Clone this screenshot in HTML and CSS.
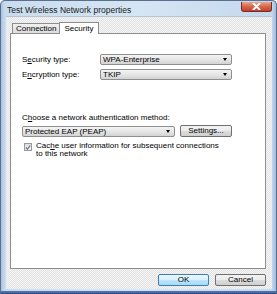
FILE: index.html
```html
<!DOCTYPE html>
<html lang="en">
<head>
    <meta charset="UTF-8">
    <meta name="viewport" content="width=device-width, initial-scale=1.0">
    <title>Test Wireless Network properties</title>
    <link rel="stylesheet" href="styles.css">
</head>
<body>

<div class="window">
    <div class="titlebar">
        <span class="title">Test Wireless Network properties</span>
        <div class="close-btn">
            <svg width="9" height="7" viewBox="0 0 9 7">
                <path d="M1.5 0.5 L7.5 6.5 M7.5 0.5 L1.5 6.5" stroke="#fff" stroke-width="2" stroke-linecap="round"/>
            </svg>
        </div>
    </div>

    <div class="client">
        <div class="tabs">
            <div class="tab">Connection</div>
            <div class="tab active">Security</div>
        </div>

        <div class="panel">
            <div class="field-row first">
                <span class="label">S<u>e</u>curity type:</span>
                <div class="combo wide"><span>WPA-Enterprise</span><i class="arrow"></i></div>
            </div>
            <div class="field-row">
                <span class="label">E<u>n</u>cryption type:</span>
                <div class="combo wide"><span>TKIP</span><i class="arrow"></i></div>
            </div>

            <p class="method-label">C<u>h</u>oose a network authentication method:</p>
            <div class="method-row">
                <div class="combo method"><span>Protected EAP (PEAP)</span><i class="arrow"></i></div>
                <div class="btn settings">Settings...</div>
            </div>

            <div class="check-row">
                <div class="checkbox">
                    <svg width="7" height="7" viewBox="0 0 7 7">
                        <path d="M1 3.5 L2.8 5.5 L6 1.2" fill="none" stroke="#6d7f99" stroke-width="1.4"/>
                    </svg>
                </div>
                <span class="check-text">Cac<u>h</u>e user information for subsequent connections<br>to this network</span>
            </div>
        </div>

        <div class="buttons">
            <div class="btn default">OK</div>
            <div class="btn">Cancel</div>
        </div>
    </div>
</div>

</body>
</html>
```

FILE: styles.css
```css
body {
    margin: 0;
    font-family: "Liberation Sans", Arial, sans-serif;
    font-size: 8px;
    color: #000;
    background: #fff;
}

.window {
    width: 277px;
    height: 294px;
    box-sizing: border-box;
    border: 1px solid #5b6f8c;
    border-bottom-color: #2d4c82;
    border-radius: 5px 5px 0 0;
    background: linear-gradient(90deg, #a9c3e2 0, #c9dcef 4px, #d6e5f3 50%, #c4d8ee calc(100% - 4px), #9fbbdc 100%);
    display: flex;
    flex-direction: column;
    padding: 0 4px 4px 5px;
    box-shadow: inset 0 -2px 0 #4a6fa8;
}

.titlebar {
    height: 15px;
    display: flex;
    align-items: center;
    justify-content: space-between;
    padding-left: 1px;
}

.title {
    font-size: 8.5px;
    color: #1a1a1a;
    margin-top: 2px;
}

.close-btn {
    width: 29px;
    height: 9px;
    margin-top: -3px;
    border: 1px solid #7d2a1c;
    border-top: none;
    border-radius: 0 0 3px 3px;
    background: linear-gradient(#e8a593, #d4674c 50%, #c2412a);
    display: flex;
    align-items: center;
    justify-content: center;
}

.client {
    flex: 1;
    display: flex;
    flex-direction: column;
    padding: 4px 6px 0 4px;
    background-color: #ececec;
    background-image: conic-gradient(#f5f5f5 25%, #e3e3e3 0 50%, #f5f5f5 0 75%, #e3e3e3 0);
    background-size: 2px 2px;
    border-top: 1px solid #b4c4d6;
}

.tabs {
    display: flex;
    align-items: flex-end;
    height: 12px;
    padding-left: 2px;
}

.tab {
    height: 10px;
    padding: 0 3px;
    line-height: 10px;
    border: 1px solid #8c8e94;
    border-bottom: none;
    border-right: none;
    background: linear-gradient(#f1f1f1, #dcdcdc);
    box-sizing: border-box;
}

.tab.active {
    height: 12px;
    line-height: 11px;
    background: #fff;
    border-right: 1px solid #8c8e94;
    padding: 0 5px 0 4px;
    margin-bottom: -1px;
    position: relative;
}

.panel {
    height: 236px;
    box-sizing: border-box;
    background: #fff;
    border: 1px solid #8c8e94;
    padding: 20px 33px 0 11px;
}

.field-row {
    display: flex;
    align-items: center;
    height: 11px;
    margin-bottom: 4px;
}

.label {
    width: 78px;
}

.combo {
    height: 11px;
    box-sizing: border-box;
    border: 1px solid #8e8f8f;
    border-radius: 2px;
    background: linear-gradient(#f4f4f4, #e6e6e6 50%, #d3d3d3);
    display: flex;
    align-items: center;
    justify-content: space-between;
    padding: 0 4px 0 2px;
    line-height: 9px;
}

.combo.wide {
    flex: 1;
}

.arrow {
    width: 0;
    height: 0;
    border-left: 2.5px solid transparent;
    border-right: 2.5px solid transparent;
    border-top: 3px solid #000;
}

.method-label {
    margin: 33px 0 2px;
    line-height: 10px;
}

.method-row {
    display: flex;
    align-items: center;
    gap: 5px;
}

.combo.method {
    width: 153px;
}

.btn {
    height: 12px;
    box-sizing: border-box;
    border: 1px solid #707070;
    border-radius: 2px;
    background: linear-gradient(#f3f3f3, #ebebeb 50%, #dddddd 50%, #cfcfcf);
    display: flex;
    align-items: center;
    justify-content: center;
    line-height: 10px;
}

.btn.settings {
    flex: 1;
}

.check-row {
    display: flex;
    align-items: flex-start;
    gap: 4px;
    margin-top: 5px;
    padding-left: 2px;
}

.checkbox {
    width: 8px;
    height: 8px;
    box-sizing: border-box;
    border: 1px solid #9a9a9a;
    background: linear-gradient(#dcdcdc, #f4f4f4);
    display: flex;
    align-items: center;
    justify-content: center;
    margin-top: 1px;
}

.check-text {
    line-height: 8px;
}

.buttons {
    display: flex;
    justify-content: flex-end;
    gap: 6px;
    padding-top: 5px;
}

.buttons .btn {
    width: 51px;
}

.buttons .btn.default {
    border-color: #3c7fb1;
    background: linear-gradient(#eaf6fd, #d9f0fc 50%, #bee6fd 50%, #a7d9f5);
}
```
